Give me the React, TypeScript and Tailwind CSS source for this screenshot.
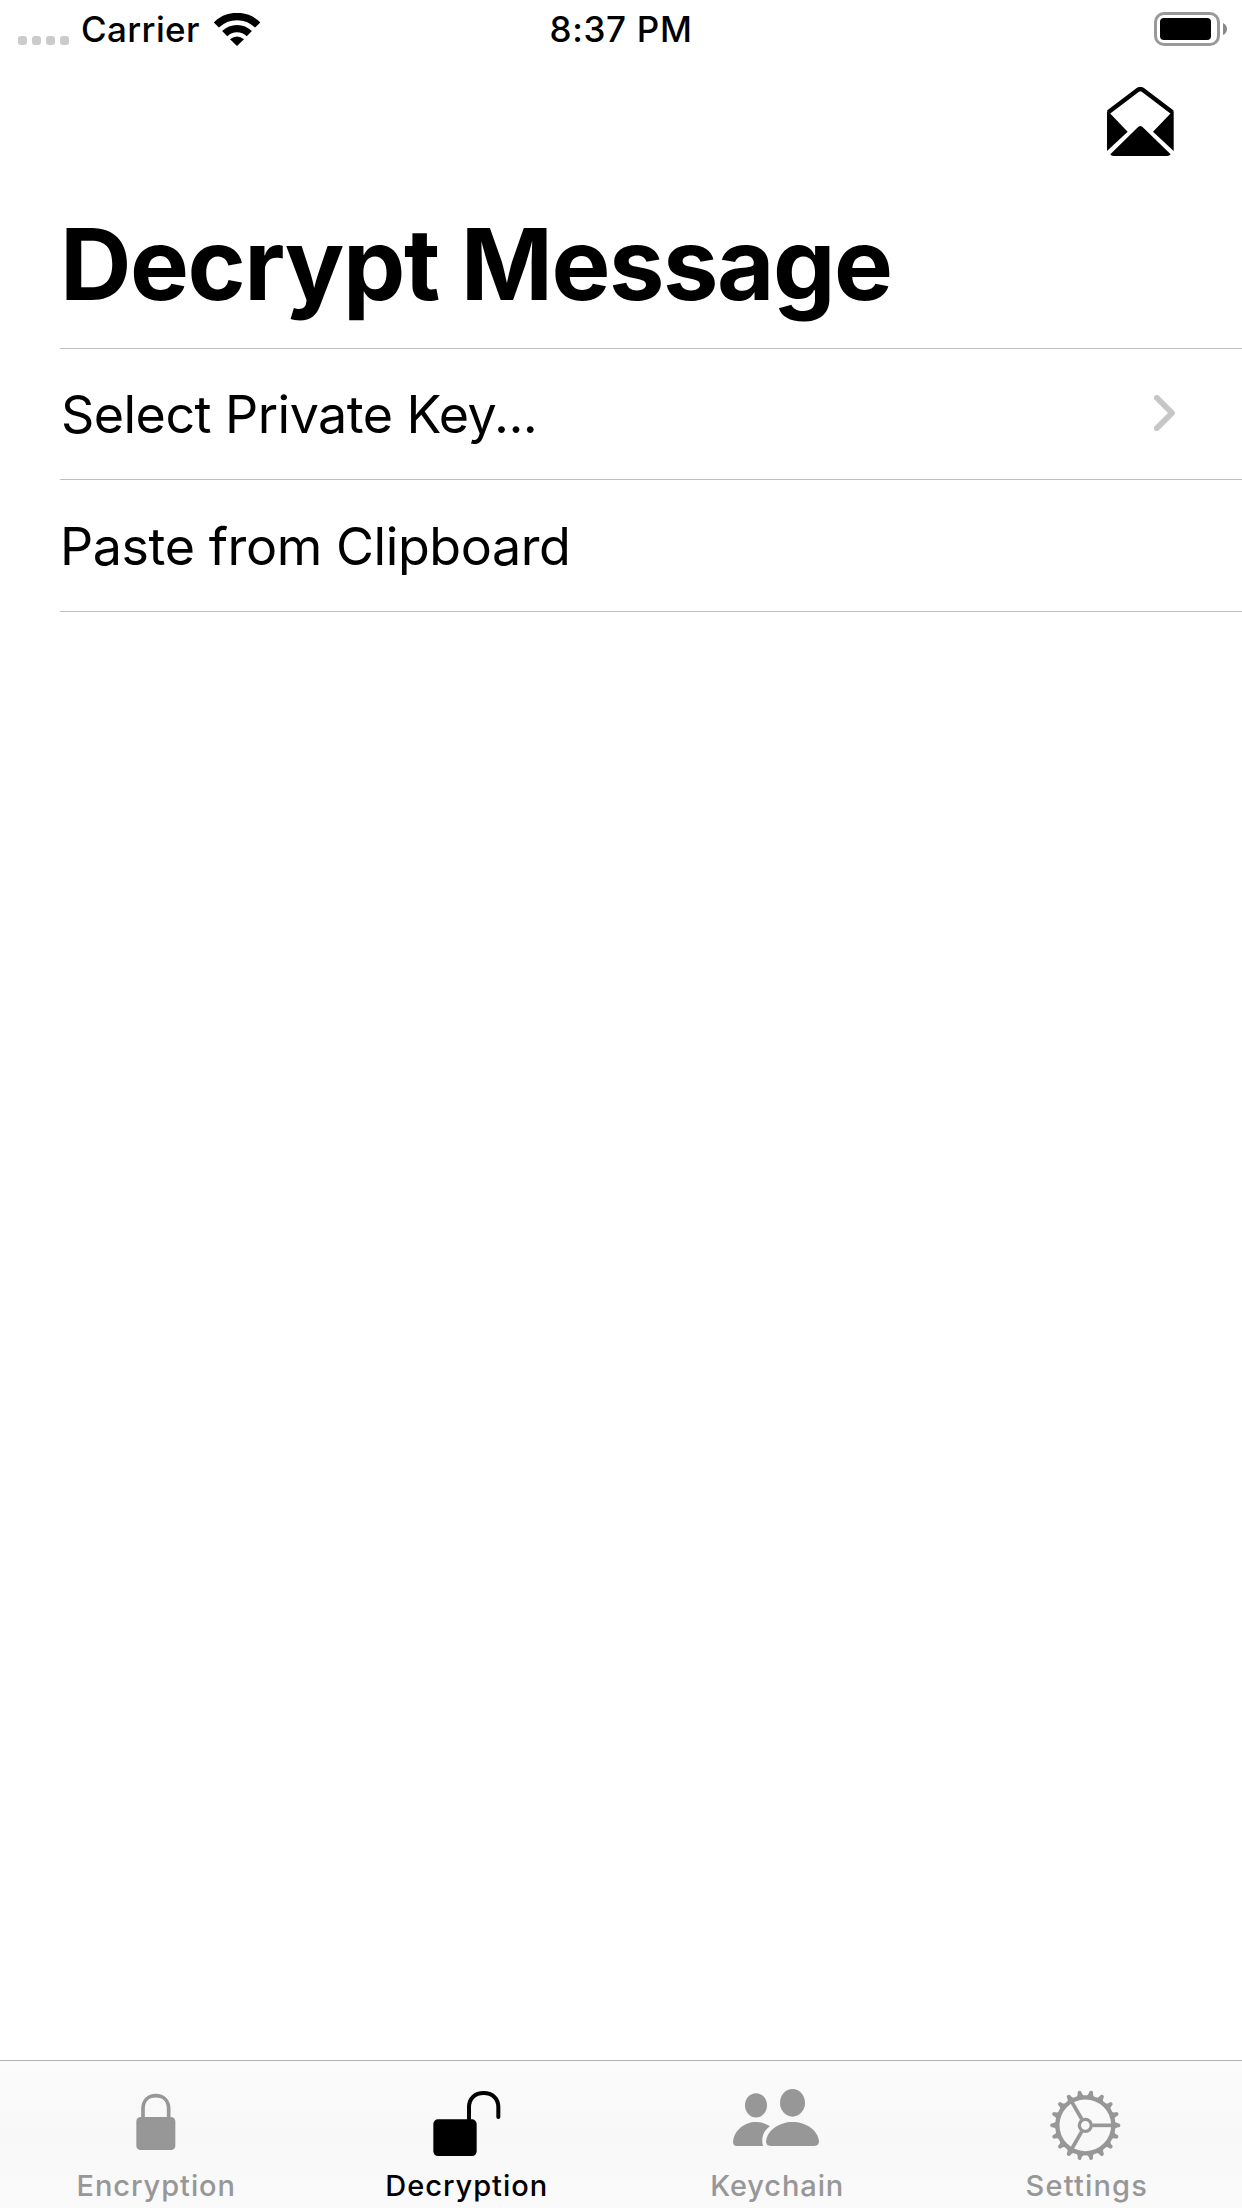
import type { ReactNode } from "react";

function StatusBar() {
  return (
    <div className="grid h-[60px] grid-cols-3 items-start">
      <div className="flex items-start pl-[18px]">
        <div className="mt-9 flex gap-[5px]">
          {[0, 1, 2, 3].map((dot) => (
            <span key={dot} className="size-[9px] rounded-[3px] bg-[#cbcbcb]" />
          ))}
        </div>
        <span className="mt-2 ml-[12px] text-[35px] leading-[42px] font-medium tracking-[0.353px]">
          Carrier
        </span>
        <svg viewBox="0 0 138 99" className="mt-[13px] ml-[14px] h-[33px] w-[46px]">
          <g fill="none" stroke="#000" strokeWidth="22">
            <path d="M7 36 A88 88 0 0 1 131 36" />
            <path d="M32 62 A53 53 0 0 1 106 62" />
          </g>
          <path d="M48 79 Q69 62 90 79 L69 99 Z" />
        </svg>
      </div>
      <div className="mt-2 text-center text-[35px] leading-[42px] font-medium tracking-[0.689px]">
        8:37 PM
      </div>
      <div className="flex justify-end pt-3 pr-[15px]">
        <svg viewBox="0 0 73 34" className="h-[34px] w-[73px]">
          <rect x="1.5" y="1.5" width="63" height="31" rx="8.5" fill="none" stroke="#999" strokeWidth="3" />
          <rect x="6" y="6" width="51" height="22" rx="4" />
          <path d="M69 11 Q73 13 73 17 Q73 21 69 23 Z" fill="#888" />
        </svg>
      </div>
    </div>
  );
}

function EnvelopeIcon() {
  return (
    <svg viewBox="52 36 201 207" className="h-[69px] w-[67px]">
      <path d="M56 112 L144 45 Q152 39 160 45 L248 112" fill="none" stroke="#000" strokeWidth="13" />
      <path d="M52 108 L60 114 L114 170 L52 228 Z" />
      <path d="M252 108 L244 114 L190 170 L252 228 Z" />
      <path d="M62 238 L143 158 Q152 148 161 158 L243 238 Q240 243 232 243 H72 Q64 243 62 238 Z" />
    </svg>
  );
}

function LockIcon() {
  return (
    <svg viewBox="0 0 190 250" className="h-[83.333px] w-[63.333px]" fill="currentColor">
      <rect x="37" y="111" width="117" height="99" rx="13" />
      <path
        d="M57 113 V87 C57 60 74 47 95.500 47 C117 47 134 60 134 87 V113"
        fill="none"
        stroke="currentColor"
        strokeWidth="11"
      />
    </svg>
  );
}

function UnlockIcon() {
  return (
    <svg viewBox="-3 0 240 250" className="h-[83.333px] w-[80px]" fill="currentColor">
      <rect x="19" y="118" width="130" height="110" rx="14" />
      <path
        d="M126 122 V82 C126 54 145 39 170 39 C195 39 214 54 214 82 V111"
        fill="none"
        stroke="currentColor"
        strokeWidth="12"
        strokeLinecap="round"
      />
    </svg>
  );
}

function PeopleIcon() {
  return (
    <svg viewBox="129 90 258 250" className="h-[83.333px] w-[86px]" fill="currentColor">
      <ellipse cx="198" cy="166" rx="33" ry="36.500" />
      <ellipse cx="307.500" cy="158.500" rx="37.500" ry="41.500" />
      <path d="M242 288 Q228 288 228 274 C232 240 268 216 308 216 C348 216 383 240 387 274 Q387 288 373 288 Z" />
      <path d="M141 288 Q129 288 129 276 C132 240 164 216 198 216 C214 216 228 221 240 229 C222 241 212 262 219 288 Z" />
    </svg>
  );
}

function GearIcon() {
  const teeth = Array.from({ length: 18 }, (_, i) => i * 20);
  return (
    <svg viewBox="-106 -136 220 250" className="h-[83.333px] w-[73.333px]" fill="none" stroke="currentColor">
      <circle r="84" strokeWidth="13" />
      <circle r="18" strokeWidth="10" />
      {[0, 120, 240].map((angle) => (
        <path key={angle} d="M22 0 H82" strokeWidth="11" transform={`rotate(${angle})`} />
      ))}
      {teeth.map((angle) => (
        <path
          key={angle}
          d="M86 -12 Q93 -6 103 -5 Q108 0 103 5 Q93 6 86 12 Z"
          fill="currentColor"
          stroke="none"
          transform={`rotate(${angle})`}
        />
      ))}
    </svg>
  );
}

function Tab({ label, icon, color, spacing }: { label: string; icon: ReactNode; color: string; spacing: string }) {
  return (
    <button className={`flex flex-col items-center pt-[19px] ${color}`}>
      {icon}
      <span className={`mt-[5px] text-[29px] leading-[35px] font-medium whitespace-nowrap ${spacing}`}>{label}</span>
    </button>
  );
}

export default function App() {
  return (
    <div className="flex h-[2208px] w-[1242px] flex-col overflow-hidden bg-white font-['Inter',sans-serif] text-black">
      <StatusBar />
      <header>
        <div className="flex h-36 justify-end pt-[27px] pr-[68px]">
          <EnvelopeIcon />
        </div>
        <h1 className="h-36 pl-[60px] text-[99px] leading-[120px] font-bold tracking-[-1.45px]">Decrypt Message</h1>
      </header>
      <main className="ml-[60px] flex-1">
        <div className="flex h-[132px] justify-between border-y border-[#bfbec3] pt-[34px] pr-[67px] pl-px">
          <span className="text-[52px] leading-[63px] tracking-[-0.55px]">Select Private Key...</span>
          <svg viewBox="0 0 21 36" className="mt-3 h-9 w-[21px]">
            <path
              d="M2.800 2.800 L18 18 L2.800 33.200"
              fill="none"
              stroke="#c6c6c8"
              strokeWidth="5.800"
              strokeLinecap="round"
              strokeLinejoin="round"
            />
          </svg>
        </div>
        <div className="h-[132px] border-b border-[#bfbec3] pt-[35px]">
          <span className="block text-[52px] leading-[63px] tracking-[-0.42px]">Paste from Clipboard</span>
        </div>
      </main>
      <nav className="grid h-[148px] grid-cols-4 border-t border-[#b2b2b2] bg-linear-to-b from-[#fbfbfb] via-[#f8f8f8] to-[#fafafa]">
        <Tab label="Encryption" icon={<LockIcon />} color="text-[#979797]" spacing="pl-0.5 tracking-[0.929px]" />
        <Tab label="Decryption" icon={<UnlockIcon />} color="text-black" spacing="pl-0.5 tracking-[0.970px]" />
        <Tab label="Keychain" icon={<PeopleIcon />} color="text-[#979797]" spacing="pl-0.5 tracking-[0.877px]" />
        <Tab label="Settings" icon={<GearIcon />} color="text-[#979797]" spacing="tracking-[1.168px]" />
      </nav>
    </div>
  );
}
